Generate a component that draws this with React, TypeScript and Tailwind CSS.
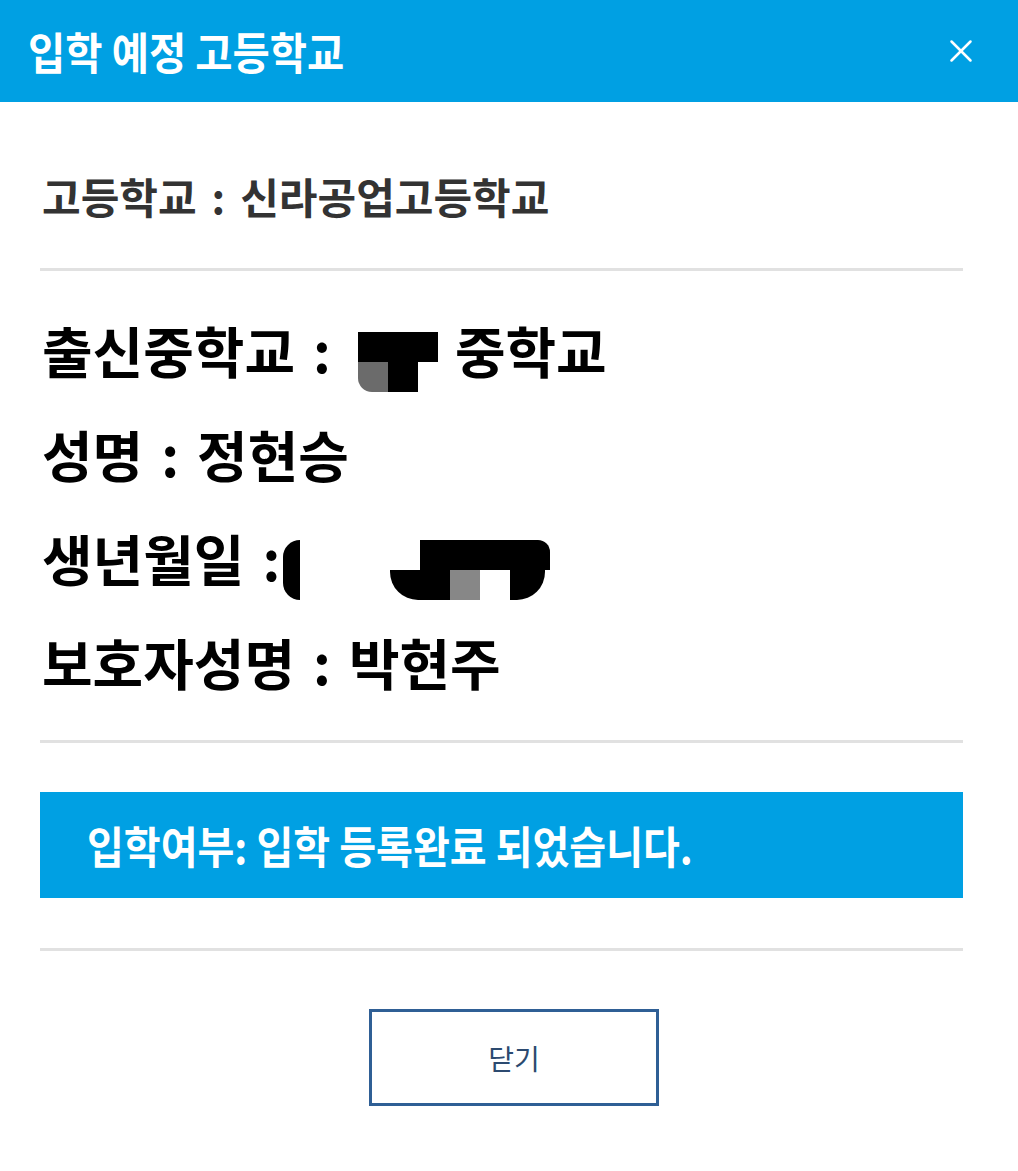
import { X } from "lucide-react";

const kr = "font-['Noto_Sans_CJK_KR','Noto_Sans',sans-serif]";

const Rule = () => <div className="h-[3px] bg-[#e1e1e1]" />;

// blurred-out personal info, drawn as flat blocks
const SchoolMask = () => (
  <span className="inline-flex flex-col w-[106px] h-[104px] pt-[35px] pl-[9px] align-top">
    <span className="w-[80px] h-[30px] bg-black" />
    <span className="flex">
      <span className="w-[30px] h-[30px] bg-[#6b6b6b] rounded-bl-[14px]" />
      <span className="w-[30px] h-[30px] bg-black" />
    </span>
  </span>
);

const BirthMask = () => (
  <span className="inline-flex items-start w-[275px] h-[104px] pt-[35px] pl-[3px] align-top">
    <span className="w-[17px] h-[60px] bg-black rounded-l-full" />
    <span className="flex flex-col ml-[90px]">
      <span className="ml-[30px] w-[130px] h-[30px] bg-black rounded-tr-[12px]" />
      <span className="flex">
        <span className="w-[60px] h-[30px] bg-black rounded-bl-[28px]" />
        <span className="w-[30px] h-[30px] bg-[#878787]" />
        <span className="w-[30px] h-[30px]" />
        <span className="w-[35px] h-[30px] bg-black rounded-br-[28px]" />
      </span>
    </span>
  </span>
);

export default function App() {
  return (
    <div className={`w-[1018px] h-[1171px] bg-white ${kr}`}>
      <header className="h-[102px] bg-[#00a0e3] flex items-center justify-between pl-[28px] pr-[38px]">
        <h1 className="text-white font-bold text-[44px] leading-none origin-left scale-x-[0.92] whitespace-nowrap">
          입학 예정 고등학교
        </h1>
        <X className="w-[38px] h-[38px] text-white" strokeWidth={1.6} />
      </header>

      <div className="ml-[40px] w-[923px]">
        <div className="pt-[66px] pb-[44px] pl-[2px]">
          <p className="text-[42px] leading-[56px] font-bold text-[#333333] whitespace-nowrap">
            고등학교<span className="mx-[15px]">:</span>신라공업고등학교
          </p>
        </div>
        <Rule />

        <div className="pt-[26px] pb-[27px] pl-[2px] text-black font-bold text-[55px] leading-[104px] whitespace-nowrap">
          <p>
            출신중학교<span className="mx-[18px]">:</span>
            <SchoolMask />
            중학교
          </p>
          <p>
            성명<span className="mx-[18px]">:</span>정현승
          </p>
          <p>
            생년월일<span className="ml-[18px]">:</span>
            <BirthMask />
          </p>
          <p>
            보호자성명<span className="mx-[18px]">:</span>박현주
          </p>
        </div>
        <Rule />

        <div className="mt-[49px] h-[106px] bg-[#00a0e3] flex items-center pl-[47px]">
          <p className="text-white font-bold text-[44px] leading-none origin-left scale-x-[0.91] whitespace-nowrap">
            입학여부: 입학 등록완료 되었습니다.
          </p>
        </div>

        <div className="mt-[50px]">
          <Rule />
        </div>

        <div className="mt-[58px] ml-[329px]">
          <button className="w-[290px] h-[97px] border-[3px] border-[#2f5f95] bg-white text-[#2c4a70] text-[28px] flex items-center justify-center">
            닫기
          </button>
        </div>
      </div>
    </div>
  );
}
